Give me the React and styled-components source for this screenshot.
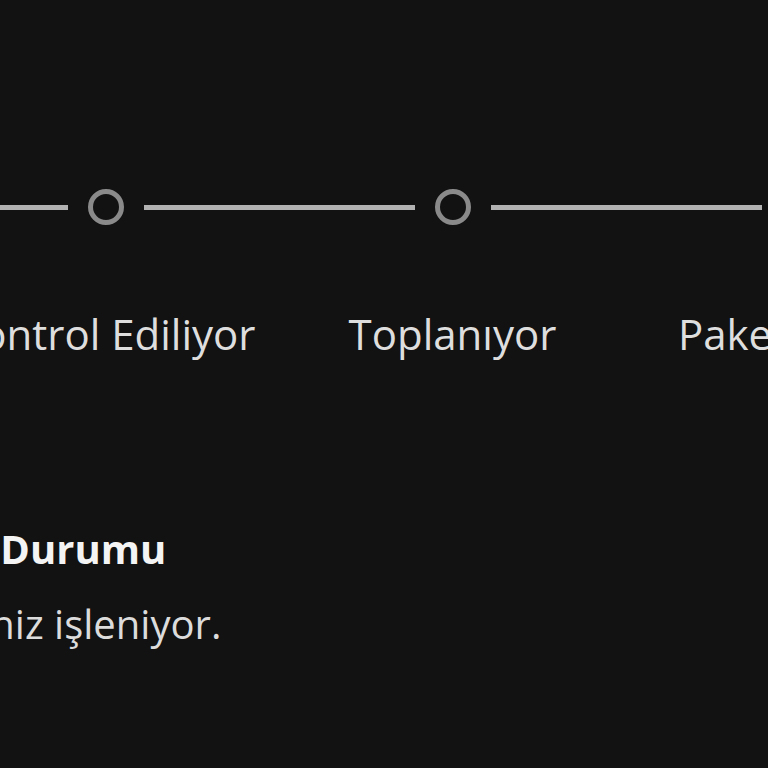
import React from "react";
import styled, { createGlobalStyle } from "styled-components";

const GlobalStyle = createGlobalStyle`
  html, body {
    margin: 0;
    padding: 0;
    background: #121212;
  }
  body {
    width: 768px;
    height: 768px;
    overflow: hidden;
    font-family: "Open Sans", "DejaVu Sans", sans-serif;
    color: #e2e2e2;
  }
`;

const Page = styled.div`
  width: 768px;
  height: 768px;
  background: #121212;
  overflow: hidden;
  padding-top: 189px;
  box-sizing: border-box;
`;

const Stepper = styled.div`
  display: flex;
  margin-left: -415px;
`;

const Step = styled.div`
  flex: 0 0 347px;
  display: flex;
  flex-direction: column;
  align-items: center;
`;

const Track = styled.div`
  display: flex;
  align-items: center;
  width: 100%;
  gap: 20px;
`;

const Line = styled.div`
  flex: 1;
  height: 5px;
  background: ${(p) => (p.$hidden ? "transparent" : "#b2b2b2")};
`;

const Dot = styled.div`
  flex: 0 0 auto;
  width: 36px;
  height: 36px;
  box-sizing: border-box;
  border: 5px solid #8a8a8a;
  border-radius: 50%;
`;

const Label = styled.div`
  margin-top: 88px;
  font-size: 42px;
  line-height: 1;
  white-space: nowrap;
  color: #dedede;
`;

const Status = styled.section`
  margin-top: 174px;
  margin-left: -144px;
`;

const Title = styled.h2`
  margin: 0;
  font-size: 40px;
  font-weight: 700;
  line-height: 1;
  color: #f4f4f4;
`;

const Text = styled.p`
  margin: 35px 0 0;
  font-size: 40px;
  line-height: 1;
  color: #dcdcdc;
`;

const steps = ["Sipariş Alındı", "Kontrol Ediliyor", "Toplanıyor", "Paketleniyor", "Kargoda"];

export default function App() {
  return (
    <Page>
      <GlobalStyle />
      <Stepper>
        {steps.map((s, i) => (
          <Step key={s}>
            <Track>
              <Line $hidden={i === 0} />
              <Dot />
              <Line $hidden={i === steps.length - 1} />
            </Track>
            <Label>{s}</Label>
          </Step>
        ))}
      </Stepper>
      <Status>
        <Title>Sipariş Durumu</Title>
        <Text>Siparişiniz işleniyor.</Text>
      </Status>
    </Page>
  );
}
